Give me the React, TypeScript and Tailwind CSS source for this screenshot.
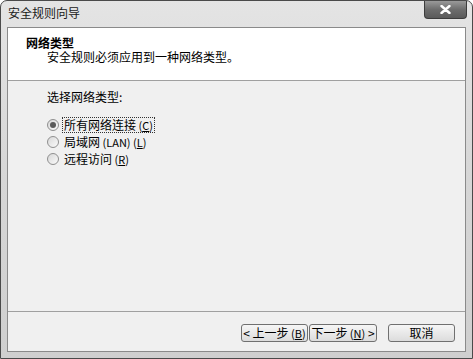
import React from 'react';

const FONT = { fontFamily: '"Noto Sans CJK SC", "Noto Sans", sans-serif' };

function Radio({ checked, label, focused }: { checked?: boolean; label: React.ReactNode; focused?: boolean }) {
  return (
    <div className="flex h-[17px] items-center gap-[3px]">
      <span className="flex h-[12px] w-[12px] items-center justify-center rounded-full border border-[#8f8f8f] bg-gradient-to-br from-[#d8d8d8] to-[#fafafa]">
        {checked && <span className="h-[6px] w-[6px] rounded-full bg-[#5a5a5a]" />}
      </span>
      <span className={focused ? 'border border-dotted border-[#333] px-[1px] leading-[13px]' : 'px-[2px] leading-[13px]'}>{label}</span>
    </div>
  );
}

function Key({ k }: { k: string }) {
  return (
    <span className="text-[11px]">
      {' ('}
      <span className="underline">{k}</span>
      {')'}
    </span>
  );
}

const btn =
  'h-[18px] rounded-[3px] border border-[#707070] bg-gradient-to-b from-[#f6f6f6] to-[#dcdcdc] text-[12px] leading-[14px]';

export default function App() {
  return (
    <div className="h-[359px] w-[473px] bg-white text-[12px] text-black" style={FONT}>
      <div className="flex h-[359px] w-[473px] flex-col rounded-t-[7px] border border-[#4a4a4a] bg-gradient-to-b from-[#e4e4e4] via-[#d6d6d6] to-[#cfcfcf]">
        <div className="flex h-[26px] items-start justify-between pl-[7px] pr-[5px]">
          <span className="mt-[5px] text-[12px] leading-[14px] text-[#1a1a1a]">安全规则向导</span>
          <button className="flex h-[18px] w-[43px] items-center justify-center rounded-b-[4px] border border-t-0 border-[#3c3c3c] bg-gradient-to-b from-[#9a9a9a] via-[#6d6d6d] to-[#5a5a5a]">
            <svg width="11" height="9" viewBox="0 0 11 9">
              <path d="M1.5 1 L9.5 8 M9.5 1 L1.5 8" stroke="#fff" strokeWidth="2.4" strokeLinecap="round" />
            </svg>
          </button>
        </div>
        <div className="mx-[6px] mb-[6px] flex flex-1 flex-col border border-[#8a8a8a] bg-[#f0f0f0]">
          <div className="h-[53px] border-b border-[#a0a0a0] bg-white pl-[18px] pt-[7px]">
            <div className="text-[12px] font-bold leading-[15px]">网络类型</div>
            <div className="pl-[21px] text-[12px] leading-[14px]">安全规则必须应用到一种网络类型。</div>
          </div>
          <div className="flex flex-1 flex-col pl-[39px] pt-[9px]">
            <div className="leading-[14px]">选择网络类型:</div>
            <div className="mt-[12px] flex flex-col">
              <Radio checked focused label={<>所有网络连接<Key k="C" /></>} />
              <Radio label={<>局域网<span className="text-[11px]"> (LAN)</span><Key k="L" /></>} />
              <Radio label={<>远程访问<Key k="R" /></>} />
            </div>
          </div>
          <div className="flex h-[40px] items-center justify-end gap-[11px] border-t border-[#a0a0a0] pr-[10px] pt-[3px]">
            <div className="flex gap-[1px]">
              <button className={`${btn} w-[67px]`}>
                &lt; 上一步<Key k="B" />
              </button>
              <button className={`${btn} w-[68px]`}>
                下一步<Key k="N" /> &gt;
              </button>
            </div>
            <button className={`${btn} w-[67px]`}>取消</button>
          </div>
        </div>
      </div>
    </div>
  );
}
